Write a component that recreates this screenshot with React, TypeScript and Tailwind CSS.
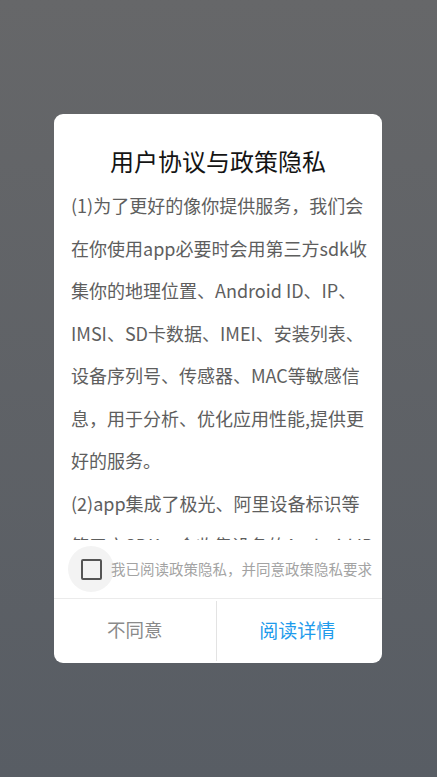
const BODY_LINES = [
  "(1)为了更好的像你提供服务，我们会",
  "在你使用app必要时会用第三方sdk收",
  "集你的地理位置、Android ID、IP、",
  "IMSI、SD卡数据、IMEI、安装列表、",
  "设备序列号、传感器、MAC等敏感信",
  "息，用于分析、优化应用性能,提供更",
  "好的服务。",
  "(2)app集成了极光、阿里设备标识等",
  "第三方SDK，会收集设备的Android ID",
];

const FONT = "font-['Noto_Sans_CJK_SC','Noto_Sans',sans-serif]";

export default function App() {
  return (
    <div
      className={`h-[777px] w-full overflow-hidden bg-gradient-to-b from-[#666769] to-[#585d64] pt-[114px] pl-[54px] ${FONT}`}
    >
      {/* Privacy dialog */}
      <div className="flex h-[549px] w-[328px] flex-col overflow-hidden rounded-[9px] bg-white">
        <h1 className="pt-[31px] text-center text-[24px] leading-[32px] text-[#141414]">
          用户协议与政策隐私
        </h1>

        <div className="mt-[7px] h-[356px] overflow-hidden pl-[17px]">
          {BODY_LINES.map((line) => (
            <p
              key={line}
              className="whitespace-nowrap text-[18px] leading-[42.5px] text-[#5e5e5e]"
            >
              {line}
            </p>
          ))}
        </div>

        {/* Consent checkbox */}
        <div className="flex h-[58px] items-center">
          <div className="ml-[14px] flex h-[46px] w-[46px] shrink-0 items-center justify-center rounded-full bg-[#f3f3f3]">
            <div className="h-[21px] w-[21px] rounded-[2px] border-[2.5px] border-[#555]" />
          </div>
          <span className="-ml-[3px] whitespace-nowrap text-[14.5px] text-[#a3a3a3]">
            我已阅读政策隐私，并同意政策隐私要求
          </span>
        </div>

        {/* Actions */}
        <div className="flex flex-1 border-t border-[#ebebeb]">
          <button
            type="button"
            className="flex flex-1 items-center justify-center pb-[2px] text-[18.5px] text-[#8a8a8a]"
          >
            不同意
          </button>
          <div className="my-[2px] w-px bg-[#e3e3e3]" />
          <button
            type="button"
            className="flex flex-1 items-center justify-center pr-[4px] pb-[2px] text-[19px] text-[#1e9bec]"
          >
            阅读详情
          </button>
        </div>
      </div>
    </div>
  );
}
